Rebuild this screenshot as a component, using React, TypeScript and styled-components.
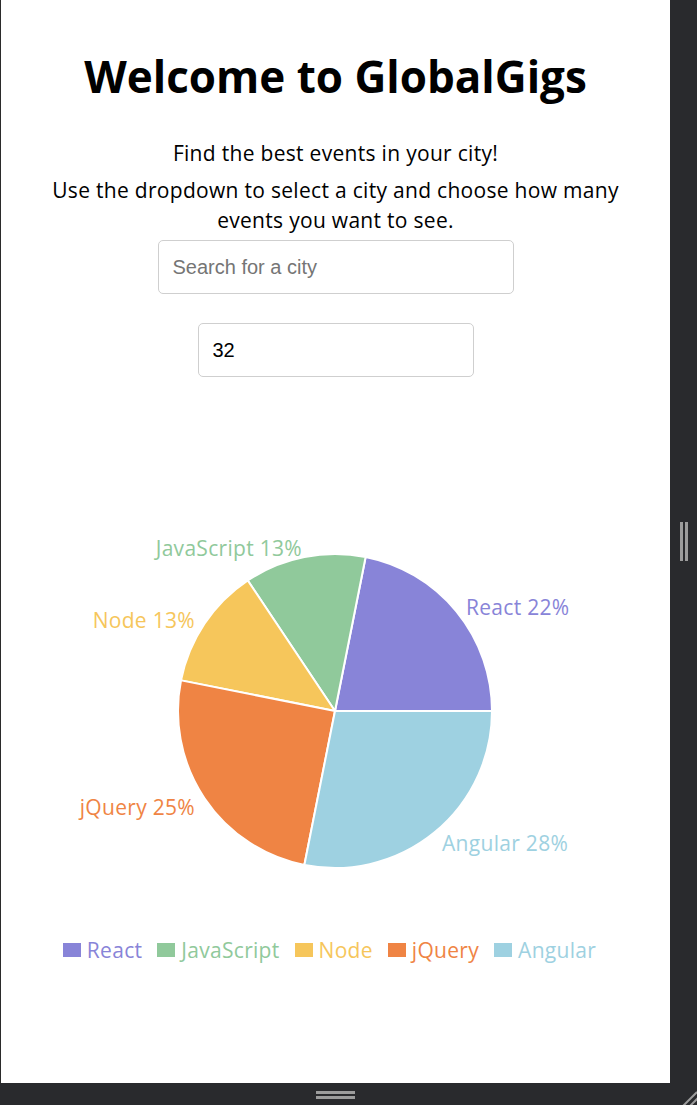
import { createGlobalStyle, styled } from 'styled-components';

const GlobalStyle = createGlobalStyle`
  html, body {
    margin: 0;
    padding: 0;
    background: #292a2d;
  }
  * {
    box-sizing: border-box;
  }
`;

const Frame = styled.div`
  display: grid;
  grid-template-columns: 670px 27px;
  grid-template-rows: 1083px 22px;
  width: 697px;
  height: 1105px;
  background: #292a2d;
`;

const Panel = styled.main`
  background: #fff;
  border-left: 1px solid #2b2b2b;
  display: flex;
  flex-direction: column;
  align-items: center;
  font-family: 'Open Sans', 'Noto Sans', sans-serif;
  color: #000;
  overflow: hidden;
`;

const Title = styled.h1`
  margin: 50px 0 0;
  font-size: 44px;
  line-height: 52px;
  font-weight: 700;
`;

const Lead = styled.p<{ $top: number }>`
  margin: ${(p) => p.$top}px 0 0;
  font-size: 21px;
  line-height: 30px;
  letter-spacing: 0.3px;
  text-align: center;
  max-width: 600px;
`;

const Input = styled.input<{ $width: number; $top: number }>`
  display: block;
  width: ${(p) => p.$width}px;
  height: 54px;
  margin-top: ${(p) => p.$top}px;
  padding: 0 14px;
  border: 1px solid #cfcfcf;
  border-radius: 5px;
  font-family: 'Liberation Sans', Arial, sans-serif;
  font-size: 20px;
  color: #000;
  outline: none;

  &::placeholder {
    color: #757575;
  }
`;

const Chart = styled.svg`
  display: block;
  margin-top: 23px;
  font-family: 'Open Sans', 'Noto Sans', sans-serif;
  font-size: 21px;
  letter-spacing: 0.3px;
`;

const Legend = styled.ul`
  display: flex;
  gap: 15px;
  margin: 8px 12px 0 0;
  padding: 0;
  list-style: none;
  font-size: 21px;
  letter-spacing: 0.3px;
  line-height: 24px;
`;

const LegendItem = styled.li<{ $color: string }>`
  display: flex;
  align-items: center;
  gap: 6px;
  color: ${(p) => p.$color};

  &::before {
    content: '';
    width: 18px;
    height: 14px;
    background: ${(p) => p.$color};
  }
`;

const SideGutter = styled.div`
  display: flex;
  align-items: center;
  justify-content: center;
  gap: 2px;
`;

const VBar = styled.span`
  width: 3px;
  height: 39px;
  background: #9c9c9c;
`;

const BottomGutter = styled.div`
  display: flex;
  flex-direction: column;
  align-items: center;
  justify-content: center;
  gap: 2px;
  padding-top: 2px;
`;

const HBar = styled.span`
  width: 39px;
  height: 3px;
  background: #9c9c9c;
`;

const Corner = styled.svg`
  display: block;
`;

const data = [
  { name: 'React', value: 7, color: '#8884d8' },
  { name: 'JavaScript', value: 4, color: '#90c99b' },
  { name: 'Node', value: 4, color: '#f6c65b' },
  { name: 'jQuery', value: 8, color: '#ef8444' },
  { name: 'Angular', value: 9, color: '#9ed1e1' },
];

// label spots measured against the pie centre
const labelPos: Record<string, { x: number; y: number; anchor: 'start' | 'end' }> = {
  React: { x: 131, y: -104, anchor: 'start' },
  JavaScript: { x: -33, y: -163, anchor: 'end' },
  Node: { x: -140, y: -91, anchor: 'end' },
  jQuery: { x: -140, y: 96, anchor: 'end' },
  Angular: { x: 107, y: 132, anchor: 'start' },
};

const CX = 334;
const CY = 311;
const R = 157;

const point = (deg: number) => {
  const a = (deg * Math.PI) / 180;
  return [CX + R * Math.cos(a), CY - R * Math.sin(a)];
};

const slicePath = (from: number, to: number) => {
  const [x0, y0] = point(from);
  const [x1, y1] = point(to);
  const large = to - from > 180 ? 1 : 0;
  return `M${CX},${CY} L${x0},${y0} A${R},${R} 0 ${large} 0 ${x1},${y1} Z`;
};

const PieChart = () => {
  const total = data.reduce((s, d) => s + d.value, 0);
  let angle = 0;

  return (
    <Chart width={669} height={530} viewBox="0 0 669 530">
      {data.map((d) => {
        const from = angle;
        angle += (d.value / total) * 360;
        return <path key={d.name} d={slicePath(from, angle)} fill={d.color} stroke="#fff" strokeWidth={2} />;
      })}
      {data.map((d) => {
        const p = labelPos[d.name];
        return (
          <text
            key={d.name}
            x={CX + p.x}
            y={CY + p.y}
            fill={d.color}
            textAnchor={p.anchor}
            dominantBaseline="central"
          >
            {`${d.name} ${((d.value / total) * 100).toFixed(0)}%`}
          </text>
        );
      })}
    </Chart>
  );
};

const App = () => {
  return (
    <>
      <GlobalStyle />
      <Frame>
        <Panel>
          <Title>Welcome to GlobalGigs</Title>
          <Lead $top={36}>Find the best events in your city!</Lead>
          <Lead $top={7}>Use the dropdown to select a city and choose how many events you want to see.</Lead>
          <Input $width={356} $top={5} type="text" placeholder="Search for a city" />
          <Input $width={276} $top={29} type="number" defaultValue={32} />
          <PieChart />
          <Legend>
            {data.map((d) => (
              <LegendItem key={d.name} $color={d.color}>
                {d.name}
              </LegendItem>
            ))}
          </Legend>
        </Panel>
        <SideGutter>
          <VBar />
          <VBar />
        </SideGutter>
        <BottomGutter>
          <HBar />
          <HBar />
        </BottomGutter>
        <Corner width={27} height={22} viewBox="0 0 27 22">
          <line x1={13} y1={23} x2={27} y2={9} stroke="#9c9c9c" strokeWidth={2} />
          <line x1={20} y1={23} x2={28} y2={15} stroke="#9c9c9c" strokeWidth={2} />
        </Corner>
      </Frame>
    </>
  );
};

export default App;
